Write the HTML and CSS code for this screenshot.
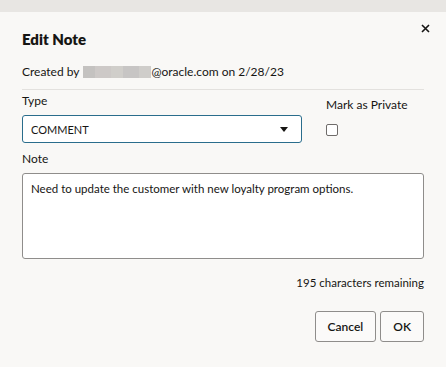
FILE: index.html
```html
<!DOCTYPE html>
<html lang="en">
<head>
  <meta charset="UTF-8" />
  <title>Edit Note</title>
  <link rel="stylesheet" href="styles.css">
</head>
<body>
  <div class="backdrop"></div>

  <div class="dialog">
    <button class="close" aria-label="Close">
      <svg width="9" height="9" viewBox="0 0 9 9"><path d="M1 1L8 8M8 1L1 8" stroke="#161513" stroke-width="1.6"/></svg>
    </button>

    <h1>Edit Note</h1>
    <div class="meta">Created by <span class="redacted"></span>@oracle.com on 2/28/23</div>
    <hr>

    <div class="row">
      <div class="field type">
        <label>Type</label>
        <div class="select">
          <span>COMMENT</span>
          <svg width="8" height="5" viewBox="0 0 8 5"><path d="M0 0H8L4 5Z" fill="#161513"/></svg>
        </div>
      </div>
      <div class="field private">
        <label>Mark as Private</label>
        <div class="checkbox"></div>
      </div>
    </div>

    <div class="field note">
      <label>Note</label>
      <div class="textarea">Need to update the customer with new loyalty program options.</div>
    </div>

    <div class="remaining">195 characters remaining</div>

    <div class="buttons">
      <button class="btn">Cancel</button>
      <button class="btn">OK</button>
    </div>
  </div>
</body>
</html>
```

FILE: styles.css
```css
body {
  margin: 0;
  background: #f9f8f6;
  font-family: "Lato", "Noto Sans", sans-serif;
  color: #161513;
  font-size: 12px;
}

.backdrop {
  height: 12px;
  background: #e8e6e3;
}

.dialog {
  position: relative;
  padding: 16px 22px 0 22px;
  background: #f9f8f6;
}

.close {
  position: absolute;
  top: 5px;
  right: 10px;
  width: 22px;
  height: 22px;
  border: none;
  background: none;
  padding: 0;
  display: flex;
  align-items: center;
  justify-content: center;
}

h1 {
  margin: 0;
  font-size: 15px;
  font-weight: 800;
  line-height: 22px;
}

.meta {
  margin-top: 13px;
  line-height: 18px;
  display: flex;
  align-items: center;
}

.redacted {
  display: inline-block;
  width: 68px;
  height: 12px;
  margin-left: 4px;
  background: linear-gradient(90deg, #c4c2c0 0 12px, #cdc9c7 12px 28px, #d0ceca 28px 40px, #c7c5c4 40px 56px, #cfcdca 56px);
}

hr {
  border: none;
  border-top: 1px solid #e3e1de;
  margin: 8px 0 0 0;
}

.row {
  display: flex;
}

.field label {
  display: block;
  line-height: 18px;
}

.type {
  width: 280px;
  margin-top: 2px;
}

.type label {
  margin-bottom: 5px;
}

.select {
  height: 26px;
  border: 1.5px solid #2a6d8c;
  border-radius: 3px;
  background: #fff;
  display: flex;
  align-items: center;
  justify-content: space-between;
  padding: 0 13px 0 8px;
  font-size: 11px;
}

.private {
  margin-left: 24px;
  margin-top: 6px;
}

.checkbox {
  width: 10px;
  height: 10px;
  border: 1px solid #6f6c6a;
  border-radius: 2px;
  background: #fff;
  margin-top: 10px;
}

.note {
  margin-top: 7px;
}

.note label {
  margin-bottom: 5px;
}

.textarea {
  height: 72px;
  border: 1px solid #8f8d8b;
  border-radius: 3px;
  background: #fff;
  padding: 6px 8px;
  font-size: 11.5px;
  line-height: 18px;
}

.remaining {
  text-align: right;
  margin-top: 16px;
  font-size: 11.5px;
  line-height: 16px;
}

.buttons {
  display: flex;
  justify-content: flex-end;
  gap: 4px;
  margin-top: 20px;
}

.btn {
  height: 31px;
  padding: 0 12px;
  border: 1px solid #8f8d8b;
  border-radius: 3px;
  background: #fbfaf9;
  font-family: inherit;
  font-size: 12px;
  font-weight: 600;
  color: #161513;
}
```
